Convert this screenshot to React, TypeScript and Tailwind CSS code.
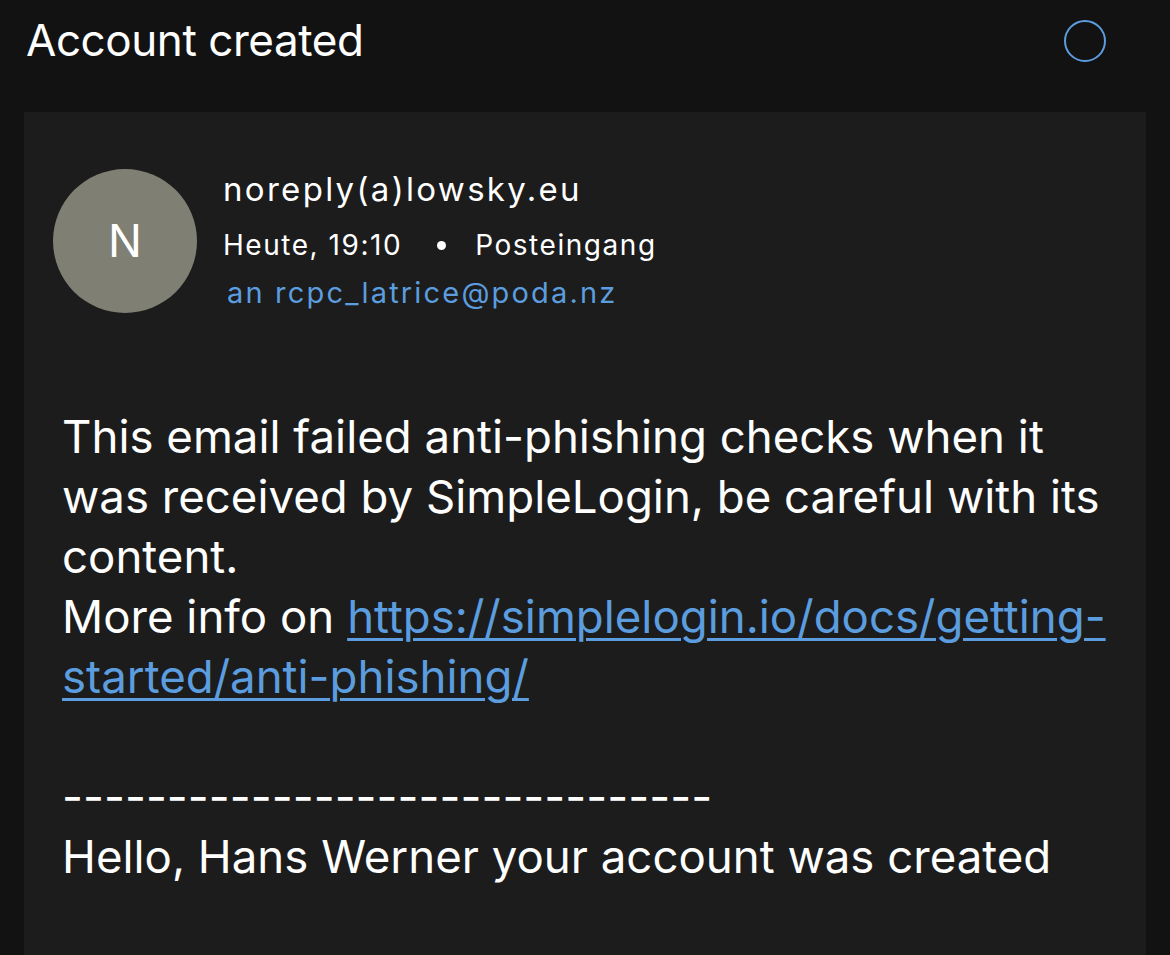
import React from 'react';

const font = { fontFamily: 'Inter, "Noto Sans", sans-serif' };

export default function App() {
    return (
        <div className="h-[955px] w-[1170px] overflow-hidden bg-[#121212] text-white flex flex-col" style={font}>
            <header className="h-[112px] shrink-0 flex items-start justify-between pl-[26px] pr-[64px] pt-[12px]">
                <h1 className="text-[44px] leading-[56px] tracking-[-0.01em]">Account created</h1>
                <div className="mt-[8px] w-[42px] h-[42px] rounded-full border-2 border-[#5b9ddf]" />
            </header>

            <main className="mx-[24px] flex-1 bg-[#1c1c1c] pl-[29px] pr-[30px] pt-[57px]">
                <div className="flex items-start gap-[26px]">
                    <div className="w-[144px] h-[144px] rounded-full bg-[#7f7f73] flex items-center justify-center text-[45px] shrink-0">
                        N
                    </div>
                    <div className="flex flex-col">
                        <div className="text-[33px] leading-[40px] tracking-[0.07em] whitespace-nowrap">noreply(a)lowsky.eu</div>
                        <div className="flex items-center text-[28px] leading-[36px] mt-[18px] tracking-[0.055em] whitespace-nowrap">
                            <span>Heute, 19:10</span>
                            <span className="ml-[35px] mr-[29px] w-[9px] h-[9px] rounded-full bg-white" />
                            <span>Posteingang</span>
                        </div>
                        <div className="text-[29px] leading-[36px] mt-[12px] text-[#5b9ddf] pl-[4px] tracking-[0.075em] whitespace-nowrap">
                            an rcpc_latrice@poda.nz
                        </div>
                    </div>
                </div>

                <div className="mt-[94px] pl-[9px] text-[45.6px] leading-[60px] whitespace-nowrap">
                    <p>
                        This email failed anti-phishing checks when it
                        <br />
                        was received by SimpleLogin, be careful with its
                        <br />
                        content.
                        <br />
                        More info on{' '}
                        <a href="#" className="text-[#5b9ddf] underline underline-offset-[5px] decoration-[3px]">
                            https://simplelogin.io/docs/getting-
                            <br />
                            started/anti-phishing/
                        </a>
                    </p>
                    <p className="h-[60px]" />
                    <p>-------------------------------</p>
                    <p>Hello, Hans Werner your account was created</p>
                </div>
            </main>
        </div>
    );
}
